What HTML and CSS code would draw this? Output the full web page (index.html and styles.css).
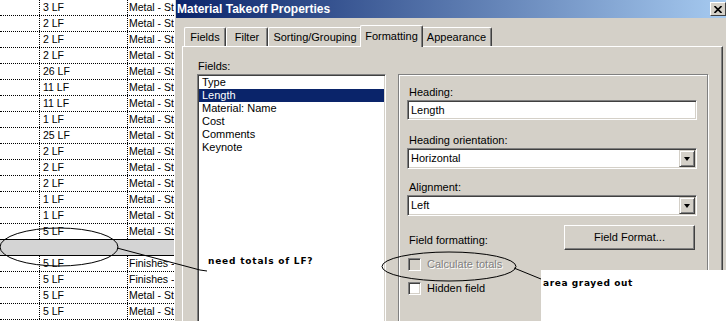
FILE: index.html
```html
<!DOCTYPE html>
<html lang="en">
<head>
<meta charset="UTF-8">
<meta name="viewport" content="width=device-width, initial-scale=1.0">
<title>Material Takeoff Properties</title>
<link rel="stylesheet" href="styles.css">
</head>
<body>

<div class="screen">

  <div class="sheet">
    <div class="row"><span class="c0"></span><span class="c1">3 LF</span><span class="c2">Metal - Stud Layer</span></div>
    <div class="row"><span class="c0"></span><span class="c1">2 LF</span><span class="c2">Metal - Stud Layer</span></div>
    <div class="row"><span class="c0"></span><span class="c1">2 LF</span><span class="c2">Metal - Stud Layer</span></div>
    <div class="row"><span class="c0"></span><span class="c1">2 LF</span><span class="c2">Metal - Stud Layer</span></div>
    <div class="row"><span class="c0"></span><span class="c1">26 LF</span><span class="c2">Metal - Stud Layer</span></div>
    <div class="row"><span class="c0"></span><span class="c1">11 LF</span><span class="c2">Metal - Stud Layer</span></div>
    <div class="row"><span class="c0"></span><span class="c1">11 LF</span><span class="c2">Metal - Stud Layer</span></div>
    <div class="row"><span class="c0"></span><span class="c1">1 LF</span><span class="c2">Metal - Stud Layer</span></div>
    <div class="row"><span class="c0"></span><span class="c1">25 LF</span><span class="c2">Metal - Stud Layer</span></div>
    <div class="row"><span class="c0"></span><span class="c1">2 LF</span><span class="c2">Metal - Stud Layer</span></div>
    <div class="row"><span class="c0"></span><span class="c1">2 LF</span><span class="c2">Metal - Stud Layer</span></div>
    <div class="row"><span class="c0"></span><span class="c1">2 LF</span><span class="c2">Metal - Stud Layer</span></div>
    <div class="row"><span class="c0"></span><span class="c1">1 LF</span><span class="c2">Metal - Stud Layer</span></div>
    <div class="row"><span class="c0"></span><span class="c1">1 LF</span><span class="c2">Metal - Stud Layer</span></div>
    <div class="row"><span class="c0"></span><span class="c1">5 LF</span><span class="c2">Metal - Stud Layer</span></div>
    <div class="row total"><span class="c0"></span><span class="c1"></span><span class="c2"></span></div>
    <div class="row"><span class="c0"></span><span class="c1">5 LF</span><span class="c2">Finishes - Paint</span></div>
    <div class="row"><span class="c0"></span><span class="c1">5 LF</span><span class="c2">Finishes - Paint</span></div>
    <div class="row"><span class="c0"></span><span class="c1">5 LF</span><span class="c2">Metal - Stud Layer</span></div>
    <div class="row"><span class="c0"></span><span class="c1">5 LF</span><span class="c2">Metal - Stud Layer</span></div>
  </div>

  <div class="dialog">
    <div class="titlebar">
      <span class="title">Material Takeoff Properties</span>
      <span class="close">
        <svg width="8" height="7" viewBox="0 0 8 7"><path d="M0.5 0 L7.5 7 M7.5 0 L0.5 7" stroke="#000" stroke-width="1.6" fill="none"/></svg>
      </span>
    </div>

    <div class="dialog-body">
      <div class="tabs">
        <div class="tab tab-fields">Fields</div>
        <div class="tab tab-filter">Filter</div>
        <div class="tab tab-sorting">Sorting/Grouping</div>
        <div class="tab tab-formatting active">Formatting</div>
        <div class="tab tab-appearance">Appearance</div>
      </div>

      <div class="panel">
        <div class="fields-col">
          <div class="label">Fields:</div>
          <div class="listbox">
            <div class="item">Type</div>
            <div class="item selected">Length</div>
            <div class="item">Material: Name</div>
            <div class="item">Cost</div>
            <div class="item">Comments</div>
            <div class="item">Keynote</div>
          </div>
        </div>

        <div class="groupbox">
          <div class="label">Heading:</div>
          <div class="textbox">Length</div>

          <div class="label spaced">Heading orientation:</div>
          <div class="select"><span class="value">Horizontal</span><span class="drop"><i class="arrow"></i></span></div>

          <div class="label spaced-sm">Alignment:</div>
          <div class="select"><span class="value">Left</span><span class="drop"><i class="arrow"></i></span></div>

          <div class="format-row">
            <div class="label">Field formatting:</div>
            <div class="button">Field Format...</div>
          </div>

          <div class="check disabled"><span class="box"></span>Calculate totals</div>
          <div class="check hidden-row"><span class="box"></span>Hidden field</div>
        </div>
      </div>
    </div>
  </div>

  <svg class="marks" width="726" height="321" viewBox="0 0 726 321">
    <ellipse cx="59" cy="247" rx="59" ry="19" fill="none" stroke="#000" stroke-width="1"/>
    <polyline points="117,248 200,270 207,271" fill="none" stroke="#000" stroke-width="1"/>
    <ellipse cx="449" cy="266.5" rx="67" ry="14.5" fill="none" stroke="#000" stroke-width="1"/>
    <line x1="514" y1="268" x2="541" y2="279" stroke="#000" stroke-width="1"/>
  </svg>

  <div class="note note-left">need totals of LF?</div>
  <div class="note note-right">area grayed out</div>

</div>

</body>
</html>
```

FILE: styles.css
```css
body {
  margin: 0;
  font-family: "Liberation Sans", Arial, sans-serif;
  font-size: 11px;
  color: #000;
  background: #fff;
}
.screen {
  position: relative;
  display: flex;
  width: 726px;
  height: 321px;
  overflow: hidden;
}

/* schedule behind the dialog */
.sheet {
  width: 174px;
  flex-shrink: 0;
  overflow: hidden;
  font-size: 10.5px;
}
.row {
  display: flex;
  height: 15px;
  line-height: 15px;
  border-bottom: 1px dotted #000;
  white-space: nowrap;
}
.row span {
  display: block;
  overflow: hidden;
}
.c0 {
  width: 39px;
  border-right: 1px dotted #000;
}
.c1 {
  width: 84px;
  padding-left: 3px;
  border-right: 1px dotted #000;
}
.c2 {
  flex: 1;
  padding-left: 1px;
}
.row.total {
  background: #d4d4d4;
  border-bottom: 1px solid #000;
  box-shadow: 0 -1px 0 #000;
}
.row.total span {
  border-right-color: transparent;
}

/* dialog */
.dialog {
  flex: 1;
  display: flex;
  flex-direction: column;
  overflow: hidden;
  background: #d4d0c8;
  border-left: 1px solid #fff;
  padding-left: 1px;
}
.titlebar {
  display: flex;
  flex-shrink: 0;
  align-items: center;
  justify-content: space-between;
  height: 18px;
  background: linear-gradient(to right, #0a246a, #a6caf0);
}
.title {
  padding-left: 1px;
  color: #fff;
  font-weight: bold;
  font-size: 12px;
}
.close {
  display: flex;
  align-items: center;
  justify-content: center;
  width: 14px;
  height: 12px;
  background: #d4d0c8;
  border: 1px solid;
  border-color: #fff #404040 #404040 #fff;
}
.dialog-body {
  flex: 1;
  display: flex;
  flex-direction: column;
  min-height: 0;
  padding: 7px 3px 0 6px;
}
.tabs {
  display: flex;
  flex-shrink: 0;
  align-items: flex-end;
  height: 21px;
  padding-left: 2px;
}
.tab {
  height: 18px;
  line-height: 18px;
  text-align: center;
  border-top: 1px solid #fff;
  border-left: 1px solid #fff;
  border-right: 1px solid #404040;
  border-radius: 2px 2px 0 0;
  box-shadow: inset -1px 0 #808080;
}
.tab-fields { width: 40px; }
.tab-filter { width: 40px; }
.tab-sorting { width: 92px; }
.tab-formatting { width: 57px; }
.tab-appearance { width: 69px; }
.tab.active {
  position: relative;
  z-index: 1;
  height: 21px;
  line-height: 20px;
  margin: 0 -2px -1px;
  padding: 0 2px;
  background: #d4d0c8;
}
.panel {
  flex: 1;
  display: flex;
  min-height: 0;
  padding: 12px 14px 0 14px;
  border-top: 1px solid #fff;
  border-left: 1px solid #fff;
  border-right: 1px solid #404040;
  box-shadow: inset -1px 0 #808080;
}
.label {
  height: 14px;
  line-height: 14px;
  padding-left: 1px;
  white-space: nowrap;
}
.fields-col {
  width: 189px;
  flex-shrink: 0;
  margin-right: 12px;
}
.fields-col .label {
  margin-bottom: 1px;
}
.listbox {
  height: 260px;
  padding: 1px;
  background: #fff;
  border: 1px solid;
  border-color: #808080 #fff #fff #808080;
  box-shadow: inset 1px 1px #404040, inset -1px -1px #d4d0c8;
}
.item {
  height: 13px;
  line-height: 13px;
  padding-left: 3px;
}
.item.selected {
  background: #0a246a;
  color: #fff;
}

.groupbox {
  flex: 1;
  align-self: flex-start;
  height: 260px;
  margin-top: 15px;
  padding: 10px 10px 0 8px;
  border: 1px solid #808080;
  box-shadow: inset 1px 1px #fff, 1px 1px #fff;
}
.groupbox .label {
  padding-left: 2px;
  margin-bottom: 1px;
}
.groupbox .spaced { margin-top: 13px; }
.groupbox .spaced-sm { margin-top: 11px; }
.textbox,
.select {
  background: #fff;
  border: 1px solid;
  border-color: #808080 #fff #fff #808080;
  box-shadow: inset 1px 1px #404040, inset -1px -1px #d4d0c8;
}
.textbox {
  height: 18px;
  line-height: 18px;
  padding-left: 3px;
}
.select {
  display: flex;
  height: 17px;
  padding: 1px;
  line-height: 17px;
}
.select .value {
  flex: 1;
  padding-left: 2px;
}
.drop {
  display: flex;
  align-items: center;
  justify-content: center;
  width: 14px;
  height: 15px;
  background: #d4d0c8;
  border: 1px solid;
  border-color: #d4d0c8 #404040 #404040 #d4d0c8;
  box-shadow: inset 1px 1px #fff, inset -1px -1px #808080;
}
.arrow {
  width: 0;
  height: 0;
  border-left: 3.5px solid transparent;
  border-right: 3.5px solid transparent;
  border-top: 4px solid #000;
}
.format-row {
  display: flex;
  align-items: flex-end;
  justify-content: space-between;
  margin-top: 9px;
}
.format-row .label {
  margin-bottom: 3px;
}
.button {
  width: 129px;
  height: 23px;
  margin-right: 2px;
  line-height: 22px;
  text-align: center;
  border: 1px solid;
  border-color: #fff #404040 #404040 #fff;
  box-shadow: inset -1px -1px #808080;
}
.check {
  display: flex;
  align-items: center;
  height: 14px;
  margin-top: 7px;
  padding-left: 1px;
}
.check.hidden-row {
  margin-top: 10px;
}
.box {
  width: 9px;
  height: 9px;
  margin-right: 6px;
  background: #fff;
  border: 1px solid;
  border-color: #808080 #fff #fff #808080;
  box-shadow: inset 1px 1px #404040, inset -1px -1px #d4d0c8;
  padding: 1px;
}
.check.disabled {
  color: #808080;
  text-shadow: 1px 1px 0 #fff;
}
.check.disabled .box {
  background: #d4d0c8;
}

/* hand-drawn notes on top of the screenshot */
.marks {
  position: absolute;
  left: 0;
  top: 0;
  pointer-events: none;
}
.note {
  position: absolute;
  font-family: "DejaVu Sans", sans-serif;
  font-weight: bold;
  font-size: 9px;
  letter-spacing: 0.8px;
  line-height: 12px;
  white-space: nowrap;
}
.note-left {
  left: 208px;
  top: 255px;
}
.note-right {
  left: 541px;
  top: 270px;
  width: 183px;
  height: 51px;
  padding: 7px 0 0 2px;
  background: #fff;
  letter-spacing: 0.6px;
}
```
